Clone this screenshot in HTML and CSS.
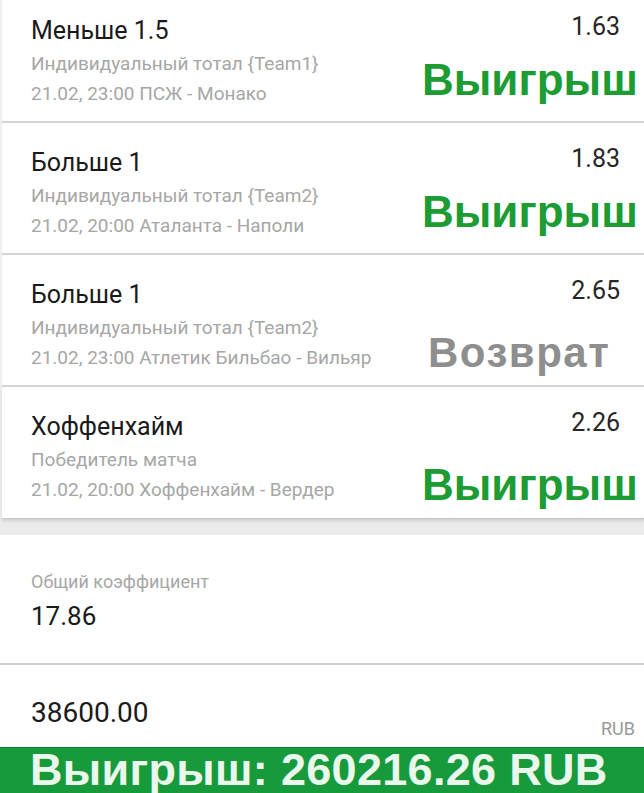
FILE: index.html
```html
<!DOCTYPE html>
<html lang="ru">
<head>
	<meta charset="UTF-8">
	<title>Купон</title>
	<link rel="stylesheet" href="styles.css">
</head>
<body>
	<div class="slip">
		<div class="bet">
			<div class="bet-main">
				<div class="bet-title">Меньше 1.5</div>
				<div class="bet-type">Индивидуальный тотал {Team1}</div>
				<div class="bet-match">21.02, 23:00 ПСЖ - Монако</div>
			</div>
			<div class="bet-side">
				<div class="bet-odds">1.63</div>
				<div class="bet-status win">Выигрыш</div>
			</div>
		</div>
		<div class="bet">
			<div class="bet-main">
				<div class="bet-title">Больше 1</div>
				<div class="bet-type">Индивидуальный тотал {Team2}</div>
				<div class="bet-match">21.02, 20:00 Аталанта - Наполи</div>
			</div>
			<div class="bet-side">
				<div class="bet-odds">1.83</div>
				<div class="bet-status win">Выигрыш</div>
			</div>
		</div>
		<div class="bet">
			<div class="bet-main">
				<div class="bet-title">Больше 1</div>
				<div class="bet-type">Индивидуальный тотал {Team2}</div>
				<div class="bet-match">21.02, 23:00 Атлетик Бильбао - Вильяр</div>
			</div>
			<div class="bet-side">
				<div class="bet-odds">2.65</div>
				<div class="bet-status back low">Возврат</div>
			</div>
		</div>
		<div class="bet">
			<div class="bet-main">
				<div class="bet-title">Хоффенхайм</div>
				<div class="bet-type">Победитель матча</div>
				<div class="bet-match">21.02, 20:00 Хоффенхайм - Вердер</div>
			</div>
			<div class="bet-side">
				<div class="bet-odds">2.26</div>
				<div class="bet-status win low">Выигрыш</div>
			</div>
		</div>
	</div>

	<div class="gap"></div>

	<div class="totals">
		<div class="total-row">
			<div class="total-label">Общий коэффициент</div>
			<div class="total-value">17.86</div>
		</div>
		<div class="stake-row">
			<div class="stake-value">38600.00</div>
			<div class="stake-cur">RUB</div>
		</div>
	</div>

	<div class="payout">Выигрыш: 260216.26 RUB</div>
</body>
</html>
```

FILE: styles.css
```css
*{
	margin: 0;
	padding: 0;
	box-sizing: border-box;
}
html,
body{
	height: 100%;
	overflow: hidden;
}
body{
	font-family: Roboto, "Noto Sans", sans-serif;
	background: #fff;
	color: #1a1a1a;
}

/* список ставок */
.slip{
	margin-top: -9px;
	border-left: 2px solid #eef0ee;
}
.bet{
	display: flex;
	height: 132px;
	border-bottom: 2px solid #d4d4d4;
}
.bet:last-child{
	border-bottom: 1px solid #c8c8c8;
	box-shadow: 0 2px 3px rgba(0,0,0,.12);
	position: relative;
}
.bet-main{
	flex: 1;
	padding: 25px 0 0 29px;
}
.bet-title{
	font-size: 25px;
	line-height: 30px;
	color: #1a1a1a;
}
.bet-type,
.bet-match{
	font-size: 19px;
	line-height: 30px;
	color: #a6a6a6;
	white-space: nowrap;
}
.bet-type{
	margin-top: 3px;
}
.bet-side{
	width: 222px;
	padding-top: 21px;
}
.bet-odds{
	padding-right: 24px;
	font-size: 25px;
	line-height: 30px;
	text-align: right;
	color: #262626;
}
.bet-status{
	margin-top: 13px;
	font-family: "Liberation Sans", Arial, sans-serif;
	font-weight: bold;
	font-size: 44px;
	line-height: 50px;
	white-space: nowrap;
}
.bet-status.low{
	margin-top: 22px;
}
.bet-status.win{
	color: #1c9c32;
}
.bet-status.back{
	padding-left: 6px;
	letter-spacing: 1.5px;
	font-size: 42px;
	color: #8e8e8e;
}

.gap{
	height: 16px;
	background: #ebebeb;
}

/* итог */
.total-row{
	height: 130px;
	padding: 35px 0 0 31px;
	border-bottom: 2px solid #cfcfcf;
}
.total-label{
	font-size: 18px;
	line-height: 24px;
	color: #a6a6a6;
}
.total-value{
	margin-top: 6px;
	font-size: 26px;
	line-height: 32px;
	color: #1a1a1a;
}
.stake-row{
	display: flex;
	justify-content: space-between;
	height: 82px;
	padding: 31px 9px 0 31px;
}
.stake-value{
	font-size: 28px;
	line-height: 34px;
	color: #1a1a1a;
}
.stake-cur{
	margin-top: 22px;
	font-size: 18px;
	line-height: 22px;
	color: #999;
}

.payout{
	height: 46px;
	padding-left: 30px;
	font-family: "Liberation Sans", Arial, sans-serif;
	font-weight: bold;
	font-size: 45px;
	line-height: 44px;
	letter-spacing: .3px;
	white-space: nowrap;
	color: #eaf7ec;
	background: #169a3c;
	border-top: 1px solid #0f7f2f;
}
```
